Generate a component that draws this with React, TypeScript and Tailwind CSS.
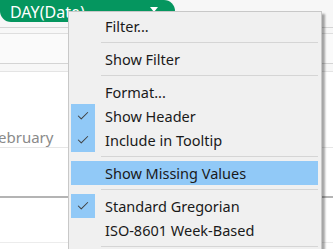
import { Check } from 'lucide-react';

type Item = { label: string; checked?: boolean; active?: boolean };

const groups: Item[][] = [
  [{ label: 'Filter...' }],
  [{ label: 'Show Filter' }],
  [
    { label: 'Format...' },
    { label: 'Show Header', checked: true },
    { label: 'Include in Tooltip', checked: true },
  ],
  [{ label: 'Show Missing Values', active: true }],
  [
    { label: 'Standard Gregorian', checked: true },
    { label: 'ISO-8601 Week-Based' },
  ],
];

function MenuRow({ item }: { item: Item }) {
  return (
    <div className={`flex h-[24px] items-center ${item.active ? 'bg-[#91c9f7]' : ''}`}>
      <div
        className={`flex h-[24px] w-[24px] shrink-0 items-center justify-center ${
          item.checked ? 'bg-[#91c9f7]' : ''
        }`}
      >
        {item.checked && <Check className="h-[14px] w-[14px] text-[#404040]" strokeWidth={1.75} />}
      </div>
      <span className="ml-[10px] text-[14.5px] leading-none text-[#1a1a1a]">{item.label}</span>
    </div>
  );
}

export default function App() {
  return (
    <div
      className="relative h-[249px] w-[333px] overflow-hidden bg-white"
      style={{ fontFamily: '"Noto Sans", "Open Sans", sans-serif' }}
    >
      {/* Pill row */}
      <div className="h-[27px] bg-[#f7f7f7]">
        <div className="flex h-[22px] w-[175px] items-center justify-between rounded-b-[11px] rounded-tr-[11px] bg-[#05965f] pl-[10px] pr-[17px] pt-[2px]">
          <span className="text-[16px] leading-none text-white">DAY(Date)</span>
          <span className="mt-[-6px] h-0 w-0 border-x-[4px] border-t-[5px] border-x-transparent border-t-white" />
        </div>
      </div>

      {/* Background shelves */}
      <div className="border-t border-[#d4d4d4]" />
      <div className="h-[5px] bg-[#f7f7f7]" />
      <div className="border-t border-[#dedede]" />
      <div className="h-[29px] bg-[#fafafa]" />
      <div className="border-t border-[#d4d4d4]" />
      <div className="h-[7px] bg-[#f7f7f7]" />
      <div className="border-t border-[#e4e4e4]" />
      <div className="flex h-[75px] items-end pb-[2px]">
        <span className="ml-[-2px] text-[15px] leading-none text-[#8a8a8a]">ebruary</span>
      </div>
      <div className="border-t border-[#e6e6e6]" />
      <div className="h-[48px]" />
      <div className="border-t-2 border-[#b4b4b4]" />
      <div className="h-[44px]" />
      <div className="border-t border-[#ececec]" />

      {/* Context menu */}
      <div className="absolute left-[68px] top-[11px] w-[254px] border border-[#c8c8c8] bg-[#f0f0f0] pb-[2px] pl-[2px] pr-[3px] pt-[2px] shadow-[3px_3px_2px_rgba(0,0,0,0.35)]">
        {groups.map((g, gi) => (
          <div key={gi}>
            {gi > 0 && (
              <div className="py-[4px] pl-[30px]">
                <div className="border-t border-[#d5d5d5]" />
              </div>
            )}
            {g.map((item) => (
              <MenuRow key={item.label} item={item} />
            ))}
          </div>
        ))}
        <div className="py-[4px] pl-[30px]">
          <div className="border-t border-[#d5d5d5]" />
        </div>
        <div className="h-[24px]" />
      </div>
    </div>
  );
}
